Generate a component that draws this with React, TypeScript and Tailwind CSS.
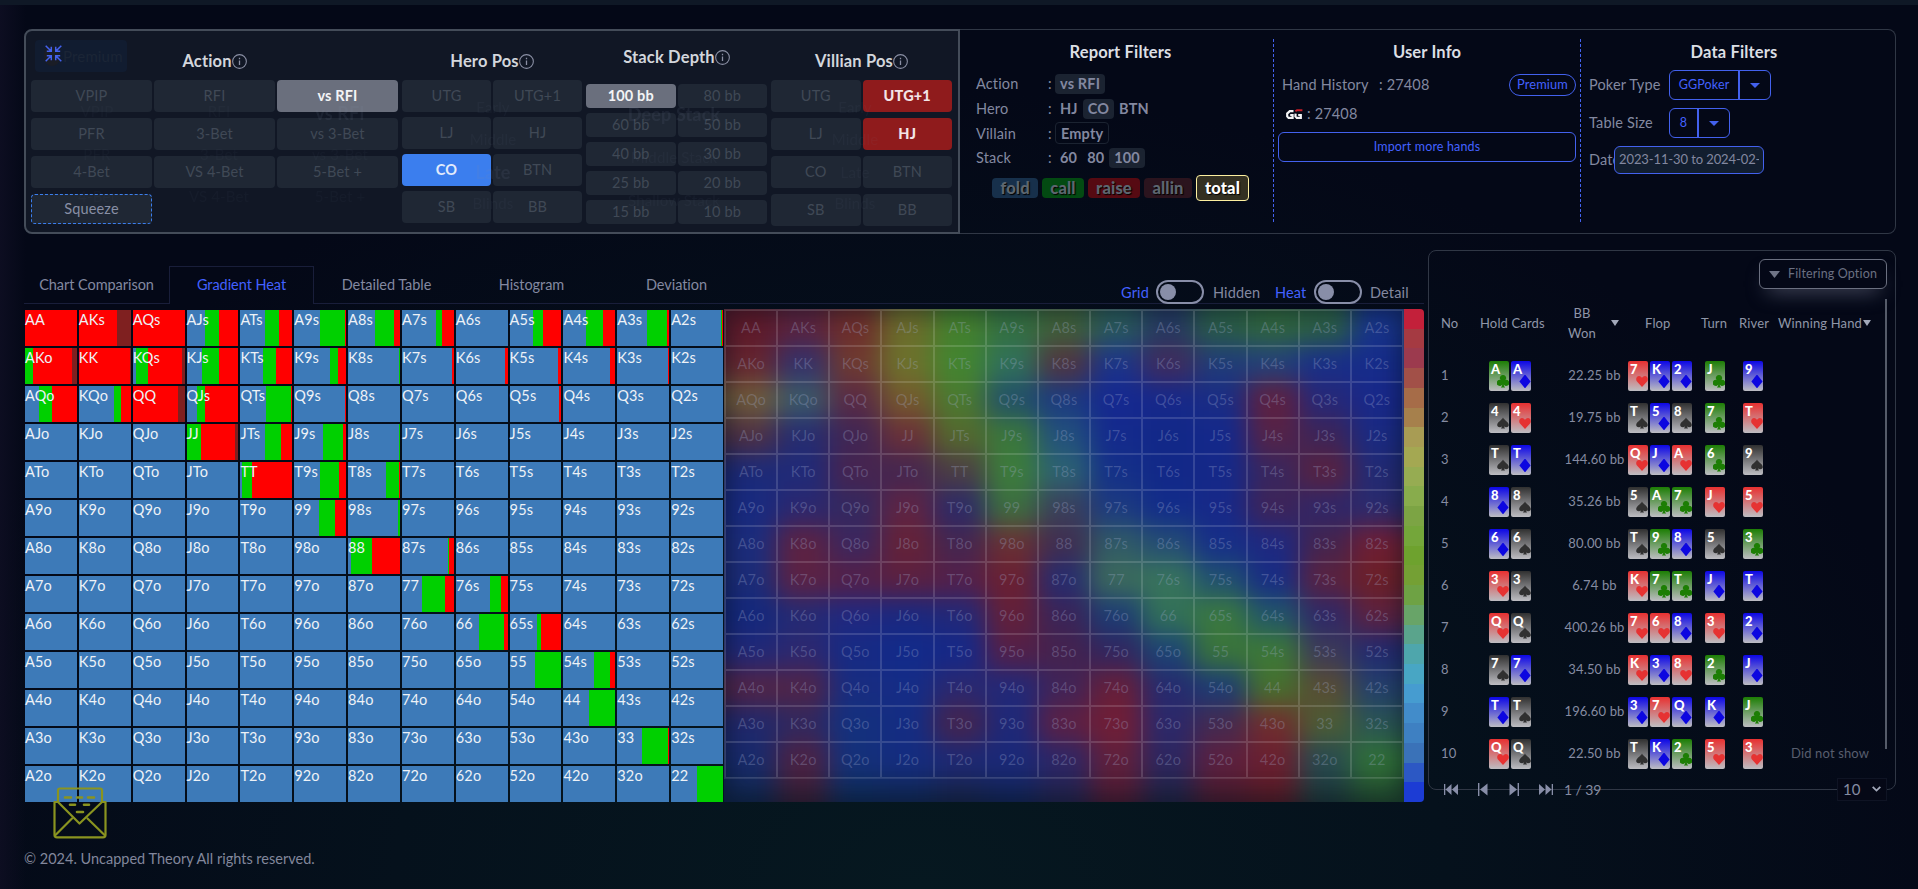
import React from 'react';

const RANKS = ['A', 'K', 'Q', 'J', 'T', '9', '8', '7', '6', '5', '4', '3', '2'];

const handName = (r: number, c: number) =>
  r === c ? RANKS[r] + RANKS[c] : r < c ? `${RANKS[r]}${RANKS[c]}s` : `${RANKS[c]}${RANKS[r]}o`;

/* Start of the call, raise and all-in segments, in percent of the cell. */
const MIX: Record<string, [number, number, number]> = {
  AA: [0, 0, 100], AKs: [0, 0, 73], AQs: [0, 0, 100], AJs: [35, 63, 100], ATs: [49, 74.5, 100],
  A9s: [50, 98, 100], A8s: [52, 88.5, 100], A7s: [65, 77, 100], A5s: [46, 64, 100], A4s: [44, 77, 100],
  A3s: [57.5, 96, 100], A2s: [96, 98, 100],
  AKo: [0, 15.5, 90], KK: [0, 0, 98], KQs: [5.5, 28.5, 94], KJs: [28.5, 63, 100], KTs: [44, 69, 100],
  K9s: [68.5, 84.5, 100], K8s: [98, 100, 100], K7s: [96, 96, 100], K6s: [94.5, 94.5, 100],
  K5s: [94.5, 94.5, 100], K4s: [90, 90, 100], K3s: [98.5, 98.5, 100],
  AQo: [27, 52, 100], KQo: [67, 81, 100], QQ: [0, 0, 86.5], QJs: [19, 35, 100], QTs: [49.5, 98, 100],
  Q9s: [98, 98, 100], Q5s: [96.5, 96.5, 100],
  JJ: [0, 27, 94.5], JTs: [49, 79, 100], J9s: [55.5, 94.5, 100], J8s: [98, 100, 100],
  TT: [3, 23, 100], T9s: [50, 86.5, 100], T8s: [73, 98, 100],
  '99': [48, 79, 100], '98s': [95.5, 100, 100],
  '88': [5.5, 46, 100], '87s': [88, 90.5, 100],
  '77': [38.5, 83, 100], '76s': [65, 86.5, 100],
  '66': [44, 92.5, 100], '65s': [52.5, 61.5, 100],
  '55': [50, 100, 100], '54s': [59.5, 90, 100],
  '44': [50, 100, 100], '33': [48, 98, 100], '22': [50, 100, 100],
};

const HEAT: string[] = [
  '5e1a2a 5b2440 6e2e2c 6b6c2c 44802e 347042 40603a 2a5a5c 263a62 2a5c48 30663f 2c5f46 18348a',
  '652530 34306a 6e3a30 6c722c 428530 30705a 503440 1c3488 402c5c 203c78 22407a 182e88 162c8a',
  '6e5c3c 3c5a68 5a2a44 745a2e 4a7a30 225068 1c3a80 152890 16288a 1a2c84 5e2040 262878 18288a',
  '4e3044 262c70 402654 6a3038 54682e 3a763c 22507c 142a8c 122888 14288a 542348 3c2458 1a2a82',
  '1c2a78 202a78 462450 442650 4c3e44 3c7c3c 2c6272 143088 122888 152888 38265e 582240 222a74',
  '182a80 2a2870 34285f 5e2444 2c2a68 3c6e40 3a405c 1c3a80 122c8a 172888 3e2458 302668 2a2a6e',
  '1c2c7c 5c2242 3c265e 642238 442650 683034 402e50 305a66 244c74 162e88 1e2880 44244e 6e1e34',
  '1c2c78 5c2244 542048 5c2040 54204a 6a2032 262c70 3c6a5c 38745c 205070 182c84 5a2240 6c2028',
  '14287c 242a74 202880 1a2880 222878 62203a 3a2458 1c3c74 327058 3a7840 225668 2e2868 5c2240',
  '202878 2c2870 162a84 122a8a 152888 542048 44224e 302660 1c4474 3a743a 3c7838 3c3a58 222a70',
  '522446 502448 182c80 152c86 2a2870 222878 402458 661f3a 262a6e 1c3c74 46702e 584c34 24406c',
  '20286c 30285f 14307e 142c82 44244e 1e2878 5c2044 701e36 2c286a 442a50 702e2e 4c5c34 2a5454',
  '182a6c 4c2244 14307a 142c80 1e2874 1a2878 2e2666 60203c 2c2660 5c2040 6a1f30 284a50 307038',
  '122852 3a2038 102c5c 122a5c 182650 14265c 242450 501c34 222448 4c1c30 581c28 1e3a3c 245030',
];

const SCALE = [
  '#c3203a', '#a53a42', '#9c3a4e', '#a25048', '#a66c48', '#a6804c', '#a89c54', '#a4a852', '#96ac52',
  '#88ac4c', '#7ca444', '#74a63a', '#6ea22e', '#74a034', '#6ea244', '#68a468', '#5aa48c', '#4ea6ac',
  '#48a6c4', '#469cd0', '#428cca', '#3e80c2', '#3a72b8', '#2c58c4', '#1c3cd4',
];

const HANDS: [string, string, string, string, string, string][] = [
  ['Ac Ad', '22.25 bb', '7h Kd 2d', 'Jc', '9d', ''],
  ['4s 4h', '19.75 bb', 'Ts 5d 8s', '7c', 'Th', ''],
  ['Ts Td', '144.60 bb', 'Qh Jd Ah', '6c', '9s', ''],
  ['8d 8s', '35.26 bb', '5s Ac 7c', 'Jh', '5h', ''],
  ['6d 6s', '80.00 bb', 'Ts 9c 8d', '5s', '3c', ''],
  ['3h 3s', '6.74 bb', 'Kh 7c Tc', 'Jd', 'Td', ''],
  ['Qh Qs', '400.26 bb', '7h 6h 8d', '3h', '2d', ''],
  ['7s 7d', '34.50 bb', 'Kh 3d 8h', '2c', 'Jd', ''],
  ['Td Ts', '196.60 bb', '3d 7h Qd', 'Kd', 'Jc', ''],
  ['Qh Qs', '22.50 bb', 'Ts Kd 2c', '5h', '3h', 'Did not show'],
];

const SUIT: Record<string, { bg: string; fill: string; path: string }> = {
  h: {
    bg: 'bg-linear-to-b/srgb from-[#e83030] to-[#bdbdc2]', fill: '#e63232',
    path: 'M6 12 L1 6.6 C-0.8 4 0.6 1 3 1 C4.6 1 5.6 2 6 3 C6.4 2 7.4 1 9 1 C11.4 1 12.8 4 11 6.6 Z',
  },
  d: {
    bg: 'bg-linear-to-b/srgb from-[#0c06e6] to-[#bdbdc2]', fill: '#0c06e0',
    path: 'M6 -0.6 L11.6 6.4 L6 13.4 L0.4 6.4 Z',
  },
  c: {
    bg: 'bg-linear-to-b/srgb from-[#1c7e04] to-[#bdbdc2]', fill: '#1c7e04',
    path: 'M6 0 A3 3 0 0 1 8.4 5 A3 3 0 1 1 6.8 9.4 L7 11 L8.2 12.6 H3.8 L5 11 L5.2 9.4 A3 3 0 1 1 3.6 5 A3 3 0 0 1 6 0 Z',
  },
  s: {
    bg: 'bg-linear-to-b/srgb from-[#303030] to-[#bdbdc2]', fill: '#303030',
    path: 'M6 0.6 C7 3 12 5.4 11.8 8.2 C11.6 10.4 8.4 10.8 6.8 9.2 L8 11.6 H4 L5.2 9.2 C3.6 10.8 0.4 10.4 0.2 8.2 C0 5.4 5 3 6 0.6 Z',
  },
};

function Card({ code }: { code: string }) {
  const s = SUIT[code[1]];
  return (
    <div className={`relative h-[30px] w-5 overflow-hidden rounded-[2px] ${s.bg}`}>
      <span className="absolute top-0 left-[2px] text-[13px] leading-[16px] font-black text-white">{code[0]}</span>
      <svg className="absolute right-0 bottom-[3px]" width="12" height="13" viewBox="0 0 12 13">
        <path d={s.path} fill={s.fill} />
      </svg>
    </div>
  );
}

function Cards({ codes }: { codes: string }) {
  return (
    <div className="flex gap-[2px]">
      {codes.split(' ').map((c, i) => (
        <Card key={i} code={c} />
      ))}
    </div>
  );
}

function Info() {
  return (
    <svg width="15" height="15" viewBox="0 0 14 14" fill="none" stroke="#8b90a5" strokeWidth="1">
      <circle cx="7" cy="7" r="6.4" />
      <path d="M7 6v4.2M7 3.6v1.2" strokeWidth="1.2" />
    </svg>
  );
}

function Heading({ children }: { children: React.ReactNode }) {
  return (
    <div className="flex h-6 items-center justify-center text-[16.5px] leading-6 font-bold text-[#d3d6dc]">
      <span>{children}</span>
      <Info />
    </div>
  );
}

type Kind = 'off' | 'grey' | 'blue' | 'red' | 'dash';
const KIND: Record<Kind, string> = {
  off: 'bg-[#1f2734] text-[#404956]',
  grey: 'bg-[#6a6f7d] text-[#f3f4f6] font-bold',
  blue: 'bg-[#3b7eee] text-[#e2ebfb] font-bold',
  red: 'bg-[#8f1b1c] text-[#f3e4e6] font-black',
  dash: 'bg-[#1f2734] text-[#888fa5] border border-dashed border-[#3b7eee]',
};

function Opt({ label, kind = 'off', h }: { label: string; kind?: Kind; h: string }) {
  return (
    <div className={`flex items-center justify-center rounded-[4px] pb-px text-[14.5px] ${h} ${KIND[kind]}`}>{label}</div>
  );
}

/* Labels of the collapsed view, almost faded out. */
const GHOSTS: [string, string][] = [
  ['VPIP', 'left-[71px] top-[80px] text-[15px] opacity-4'],
  ['RFI', 'left-[193px] top-[80px] text-[15px] opacity-4'],
  ['vs RFI', 'left-[314px] top-[82px] text-[18px] font-bold opacity-10'],
  ['PFR', 'left-[71px] top-[123px] text-[15px] opacity-4'],
  ['3-Bet', 'left-[193px] top-[123px] text-[15px] opacity-4'],
  ['vs 3-Bet', 'left-[314px] top-[123px] text-[15px] opacity-4'],
  ['4-Bet', 'left-[71px] top-[165px] text-[15px] opacity-4'],
  ['VS 4-Bet', 'left-[193px] top-[165px] text-[15px] opacity-4'],
  ['5-Bet +', 'left-[314px] top-[165px] text-[15px] opacity-4'],
  ['Early', 'left-[467px] top-[76px] text-[15px] opacity-5'],
  ['Middle', 'left-[467px] top-[108px] text-[15px] opacity-5'],
  ['Late', 'left-[467px] top-[141px] text-[18px] font-bold opacity-10'],
  ['Blinds', 'left-[467px] top-[172px] text-[15px] opacity-5'],
  ['Deep Stack', 'left-[648px] top-[83px] text-[18px] font-bold opacity-10'],
  ['Middle Stack', 'left-[648px] top-[126px] text-[15px] opacity-5'],
  ['Shallow Stack', 'left-[648px] top-[169px] text-[15px] opacity-5'],
  ['Early', 'left-[829px] top-[76px] text-[15px] opacity-5'],
  ['Middle', 'left-[829px] top-[108px] text-[15px] opacity-5'],
  ['Late', 'left-[829px] top-[141px] text-[15px] opacity-5'],
  ['Blinds', 'left-[829px] top-[172px] text-[15px] opacity-5'],
];

function Selector() {
  return (
    <div className="relative flex h-[205px] w-[936px] rounded-l-lg border-2 border-[#444c59] bg-[#111725] pl-[5px]">
      <div className="w-[367px] pt-[18px]">
        <Heading>Action</Heading>
        <div className="mt-[7px] grid grid-cols-3 gap-x-[2px] gap-y-[6px]">
          {['VPIP', 'RFI', 'vs RFI', 'PFR', '3-Bet', 'vs 3-Bet', '4-Bet', 'VS 4-Bet', '5-Bet +'].map((l) => (
            <Opt key={l} label={l} kind={l === 'vs RFI' ? 'grey' : 'off'} h="h-8" />
          ))}
          <Opt label="Squeeze" kind="dash" h="h-[30px]" />
        </div>
      </div>
      <div className="ml-1 w-[180px] pt-[18px]">
        <Heading>Hero Pos</Heading>
        <div className="mt-[7px] grid grid-cols-2 gap-x-[2px] gap-y-[5px]">
          {['UTG', 'UTG+1', 'LJ', 'HJ', 'CO', 'BTN', 'SB', 'BB'].map((l) => (
            <Opt key={l} label={l} kind={l === 'CO' ? 'blue' : 'off'} h="h-8" />
          ))}
        </div>
      </div>
      <div className="ml-1 w-[181px] pt-[14px]">
        <Heading>Stack Depth</Heading>
        <div className="mt-[15px] grid grid-cols-2 gap-x-[2px] gap-y-[5px]">
          {['100 bb', '80 bb', '60 bb', '50 bb', '40 bb', '30 bb', '25 bb', '20 bb', '15 bb', '10 bb'].map((l) => (
            <Opt key={l} label={l} kind={l === '100 bb' ? 'grey' : 'off'} h="h-6" />
          ))}
        </div>
      </div>
      <div className="ml-1 w-[181px] pt-[18px]">
        <Heading>Villian Pos</Heading>
        <div className="mt-[7px] grid grid-cols-2 gap-x-[2px] gap-y-[6px]">
          {['UTG', 'UTG+1', 'LJ', 'HJ', 'CO', 'BTN', 'SB', 'BB'].map((l) => (
            <Opt key={l} label={l} kind={l === 'UTG+1' || l === 'HJ' ? 'red' : 'off'} h="h-8" />
          ))}
        </div>
      </div>
      {/* collapse control over the fading premium badge */}
      <div className="absolute top-[9px] left-[9px] flex h-8 w-[92px] items-center rounded bg-[#111c30]">
        <div className="ml-[9px] h-5 w-4 rounded-full bg-[#1a1d26]" />
        <span className="ml-[3px] text-[15px] text-[#1b2536]">Premium</span>
        <svg className="absolute top-[5px] left-[10px]" width="17" height="17" viewBox="0 0 17 17" fill="none" stroke="#4361ee" strokeWidth="1.5">
          <path d="M0.7 0.7 6 6M6.3 1.8V6.3H1.8M16.3 0.7 11 6M10.7 1.8V6.3H15.2M0.7 16.3 6 11M6.3 15.2V10.7H1.8M16.3 16.3 11 11M10.7 15.2V10.7H15.2" />
        </svg>
      </div>
      {GHOSTS.map(([t, cls], i) => (
        <span key={i} className={`pointer-events-none absolute -translate-x-1/2 -translate-y-1/2 whitespace-nowrap text-[#7e8ca8] ${cls}`}>
          {t}
        </span>
      ))}
    </div>
  );
}

function Chip({ children, on = false }: { children: React.ReactNode; on?: boolean }) {
  return (
    <span className={`flex h-5 items-center rounded px-[5px] font-bold ${on ? 'bg-[#1b2331]' : ''}`}>{children}</span>
  );
}

function FilterRow({ label, children }: { label: string; children: React.ReactNode }) {
  return (
    <div className="flex h-[24.6px] items-center">
      <span className="w-[72px]">{label}</span>
      <span className="w-[7px]">:</span>
      <div className="flex">{children}</div>
    </div>
  );
}

function ReportFilters() {
  return (
    <div className="w-[313px] pt-[10px]">
      <h2 className="pl-2 text-center text-[16.5px] leading-6 font-bold text-[#dcdfe4]">Report Filters</h2>
      <div className="mt-[8px] pl-4 text-[14.5px] text-[#8388a0]">
        <FilterRow label="Action"><Chip on>vs RFI</Chip></FilterRow>
        <FilterRow label="Hero"><Chip>HJ</Chip><Chip on>CO</Chip><Chip>BTN</Chip></FilterRow>
        <FilterRow label="Villain">
          <span className="flex h-[22px] items-center rounded border border-[#1b2331] px-[5px] font-bold">Empty</span>
        </FilterRow>
        <FilterRow label="Stack"><Chip>60</Chip><Chip>80</Chip><Chip on>100</Chip></FilterRow>
      </div>
      <div className="mt-[5px] flex items-center gap-1 pl-8 text-[16.5px] font-black text-[#5d6670] [text-shadow:1px_1px_1px_#000]">
        <span className="flex h-5 w-[46px] items-center justify-center rounded bg-[#17304b]">fold</span>
        <span className="flex h-5 w-[42px] items-center justify-center rounded bg-[#034a12]">call</span>
        <span className="flex h-5 w-[52px] items-center justify-center rounded bg-[#560a12]">raise</span>
        <span className="flex h-5 w-[48px] items-center justify-center rounded bg-[#2b141e]">allin</span>
        <span className="flex h-[26px] w-[53px] items-center justify-center rounded border border-[#fdf0a0] bg-[#333022] text-white">total</span>
      </div>
    </div>
  );
}

function DashedDivider() {
  return (
    <div className="mt-[9px] h-[185px] w-px bg-[repeating-linear-gradient(to_bottom,#4361ee_0_3px,transparent_3px_5px)]" />
  );
}

function UserInfo() {
  return (
    <div className="w-[306px] px-1 pt-[10px] text-[14.5px] text-[#8388a0]">
      <h2 className="text-center text-[16.5px] leading-6 font-bold text-[#dcdfe4]">User Info</h2>
      <div className="mt-[9px] flex h-[24px] items-center pl-1">
        <span className="w-[97px]">Hand History</span>
        <span>: 27408</span>
        <span className="ml-auto flex h-[22px] w-[67px] items-center justify-center rounded-full border border-[#4361ee] pb-px text-[12.8px] text-[#4361ff]">
          Premium
        </span>
      </div>
      <div className="mt-1 flex h-[26px] items-center pl-2">
        <svg width="17" height="11" viewBox="0 0 17 11" fill="none" stroke="#f4f4f6" strokeWidth="2.2">
          <path d="M7.5 2.2H3.8L1.2 4.6V7.4L2.6 8.9H6.6V6H4.2" />
          <path d="M9.6 4.6 9.4 7.4 10.8 8.9H14.8V6H12.2" />
          <path d="M9.4 2.3 11 1.2H16.4" stroke="#c81e28" strokeWidth="2" />
        </svg>
        <span className="ml-1">: 27408</span>
      </div>
      <div className="mt-[5px] flex h-[30px] items-center justify-center rounded-md border border-[#4361ee] text-[12.5px] text-[#4361ff]">
        Import more hands
      </div>
    </div>
  );
}

function SplitButton({ label, w }: { label: string; w: string }) {
  return (
    <div className="flex h-[30px] rounded-md border border-[#4361ee] text-[12.5px] text-[#4361ff]">
      <span className={`flex items-center justify-center border-r-2 border-[#4361ee] ${w}`}>{label}</span>
      <span className="flex w-[30px] items-center justify-center">
        <svg width="10" height="5" viewBox="0 0 10 5"><path d="M0 0H10L5 5Z" fill="#4361ee" /></svg>
      </span>
    </div>
  );
}

function DataFilters() {
  return (
    <div className="flex-1 pt-[10px] pl-2 text-[14.5px] text-[#8388a0]">
      <h2 className="pr-4 text-center text-[16.5px] leading-6 font-bold text-[#dcdfe4]">Data Filters</h2>
      <div className="mt-[6px] flex h-[30px] items-center">
        <span className="w-20">Poker Type</span>
        <SplitButton label="GGPoker" w="w-[70px]" />
      </div>
      <div className="mt-2 flex h-[30px] items-center">
        <span className="w-20">Table Size</span>
        <SplitButton label="8" w="w-[29px]" />
      </div>
      <div className="mt-2 flex h-7 items-center">
        <span className="w-[25px] overflow-hidden">Date</span>
        <div className="flex h-7 w-[150px] items-center rounded-md border border-[#4361ee] bg-[#121e2f] px-1 text-[13px]">
          <span className="overflow-hidden whitespace-nowrap tracking-[-0.1px]">2023-11-30 to 2024-02-11</span>
        </div>
      </div>
    </div>
  );
}

function Toggle() {
  return (
    <span className="flex h-6 w-12 items-center rounded-full border-2 border-[#888ea8] pl-[2px]">
      <span className="h-4 w-4 rounded-full bg-[#888ea8]" />
    </span>
  );
}

function Tabs() {
  const tabs = ['Chart Comparison', 'Gradient Heat', 'Detailed Table', 'Histogram', 'Deviation'];
  return (
    <div className="flex h-[38px] items-stretch text-[14.5px] text-[#8388a0]">
      {tabs.map((t) => (
        <div
          key={t}
          className={
            t === 'Gradient Heat'
              ? 'flex w-[145px] items-center justify-center border border-b-0 border-[#191e3a] pb-[2px] tracking-[-0.05px] text-[#4361ff]'
              : 'flex w-[145px] items-center justify-center border-b border-[#191e3a] tracking-[-0.05px]'
          }
        >
          {t}
        </div>
      ))}
      <div className="flex flex-1 items-end justify-end border-b border-[#191e3a] pr-4">
        <div className="-mb-px flex items-center">
          <span className="w-[35px] pt-px text-[#4361ff]">Grid</span>
          <Toggle />
          <span className="ml-[9px] w-[62px] pt-px">Hidden</span>
          <span className="w-[39px] pt-px text-[#4361ff]">Heat</span>
          <Toggle />
          <span className="ml-2 w-[38px] pt-px">Detail</span>
        </div>
      </div>
    </div>
  );
}

function RangeGrid() {
  return (
    <div className="grid w-[698px] grid-cols-13 gap-[2px]">
      {RANKS.map((_, r) =>
        RANKS.map((_, c) => {
          const n = handName(r, c);
          const m = MIX[n];
          const background = m
            ? `linear-gradient(to right,#3d7ab8 ${m[0]}%,#00d000 ${m[0]}% ${m[1]}%,#f00 ${m[1]}% ${m[2]}%,#7f2020 ${m[2]}%)`
            : '#3d7ab8';
          return (
            <div key={n} className="h-9 text-[14.5px] leading-[20px] text-[#eef2f7]" style={{ background }}>
              {n}
            </div>
          );
        }),
      )}
    </div>
  );
}

function HeatMap() {
  const rows = HEAT.map((l) => l.split(' '));
  const cw = 680 / 13;
  const cells: React.ReactNode[] = [];
  for (let r = -1; r <= 14; r++) {
    for (let c = -1; c <= 13; c++) {
      const col = rows[Math.min(13, Math.max(0, r))][Math.min(12, Math.max(0, c))];
      cells.push(<rect key={`${r}:${c}`} x={c * cw} y={r * 36} width={cw + 0.6} height={36.6} fill={`#${col}`} />);
    }
  }
  return (
    <div className="relative h-[493px] w-[680px] overflow-hidden">
      <svg className="absolute inset-0" width="680" height="493" viewBox="0 0 680 493">
        <defs>
          <filter id="soft" x="-5%" y="-5%" width="110%" height="110%" colorInterpolationFilters="sRGB">
            <feGaussianBlur stdDeviation="13" />
          </filter>
        </defs>
        <g filter="url(#soft)">{cells}</g>
      </svg>
      <div className="absolute inset-0 shadow-[inset_0_0_22px_4px_rgba(4,14,26,0.5)]" />
      <div className="relative grid grid-cols-13 border border-white/10">
        {RANKS.map((_, r) =>
          RANKS.map((_, c) => (
            <div key={`${r}-${c}`} className="flex h-9 items-center justify-center border border-white/14 text-[14.5px] text-[#a9b4d8]/28">
              {handName(r, c)}
            </div>
          )),
        )}
      </div>
    </div>
  );
}

function ScaleBar() {
  return (
    <div className="flex h-[493px] w-5 flex-col overflow-hidden rounded-r">
      {SCALE.map((c, i) => (
        <div key={i} className="flex-1" style={{ background: c }} />
      ))}
    </div>
  );
}

function Caret() {
  return <svg width="8" height="6" viewBox="0 0 8 6"><path d="M0 0H8L4 6Z" fill="#a3a9ba" /></svg>;
}

function HandTable() {
  return (
    <div className="relative flex h-[540px] w-[468px] flex-col rounded-lg border border-[#303745] pl-3 text-[13px] text-[#868ca2]">
      <div className="mt-2 flex justify-end pr-2">
        <div className="flex h-[30px] w-[128px] items-center justify-center gap-2 rounded-md border border-[#6b7080] text-[12.5px] text-[#6b7082] shadow-[0_10px_20px_-8px_rgba(136,142,168,0.55)]">
          <svg width="11" height="7" viewBox="0 0 11 7"><path d="M0 0H11L5.5 7Z" fill="#6f7486" /></svg>
          Filtering Option
        </div>
      </div>
      <div className="mt-[14px] flex h-10 items-center text-[13px] leading-5 text-[#8f96a8]">
        <span className="w-[39px]">No</span>
        <span className="w-[84px]">Hold Cards</span>
        <span className="w-[36px] text-center">BB<br />Won</span>
        <span className="ml-[11px] w-[34px]"><Caret /></span>
        <span className="w-[56px]">Flop</span>
        <span className="w-[38px]">Turn</span>
        <span className="w-[39px]">River</span>
        <span>Winning Hand</span>
        <span className="pl-px"><Caret /></span>
      </div>
      <div className="mt-[12px]">
        {HANDS.map(([hold, won, flop, turn, river, win], i) => (
          <div key={i} className="grid h-[42px] grid-cols-[48px_74px_65px_77px_38px_38px_80px] items-center">
            <span>{i + 1}</span>
            <Cards codes={hold} />
            <span className="pr-[2px] text-center whitespace-nowrap">{won}</span>
            <Cards codes={flop} />
            <Cards codes={turn} />
            <Cards codes={river} />
            <span className="pl-[10px] whitespace-nowrap text-[#585e6e]">{win}</span>
          </div>
        ))}
      </div>
      <div className="mt-[2px] flex h-6 shrink-0 items-center pl-[3px]">
        <svg width="14" height="11" viewBox="0 0 14 11" fill="#888ea8"><path d="M0 0H1.3V11H0ZM7.5 0V11L1.5 5.5ZM14 0V11L8 5.5Z" /></svg>
        <svg className="ml-5" width="10" height="13" viewBox="0 0 10 13" fill="#888ea8"><path d="M0 0H1.4V13H0ZM9.5 0.5V12.5L2 6.5Z" /></svg>
        <svg className="ml-[21px]" width="10" height="13" viewBox="0 0 10 13" fill="#888ea8"><path d="M10 0H8.6V13H10ZM0.5 0.5V12.5L8 6.5Z" /></svg>
        <svg className="ml-5" width="14" height="11" viewBox="0 0 14 11" fill="#888ea8"><path d="M14 0H12.7V11H14ZM6.5 0V11L12.5 5.5ZM0 0V11L6 5.5Z" /></svg>
        <span className="ml-[11px] text-[14px] tracking-[-0.1px]">1 / 39</span>
        <div className="mr-2 ml-auto flex h-[23px] w-[50px] items-center justify-between border border-[#0f1424] bg-[#050816] px-[5px] text-[15px]">
          10
          <svg width="9" height="6" viewBox="0 0 9 6" fill="none" stroke="#a3a9ba" strokeWidth="1.8"><path d="M0.7 0.8 4.5 4.6 8.3 0.8" /></svg>
        </div>
      </div>
      <div className="absolute top-[48px] right-[8px] h-[450px] w-[2px] bg-[#555b69]" />
    </div>
  );
}

export default function App() {
  return (
    <div className="relative h-[889px] w-[1918px] overflow-hidden bg-[#050b18] bg-[linear-gradient(to_right,rgba(14,14,34,0.9)_0,rgba(14,14,34,0)_26px),radial-gradient(ellipse_1050px_800px_at_48%_100%,#061820_0%,#05111c_50%,#040817_100%)] font-[Lato,'Noto_Sans',sans-serif] tracking-[0.15px]">
      <div className="h-[5px] bg-[#0f1826]" />
      <div className="mx-6 mt-6 flex h-[205px] w-[1872px] rounded-lg">
        <Selector />
        <div className="flex flex-1 rounded-r-lg border border-l-0 border-[#303745]">
          <ReportFilters />
          <DashedDivider />
          <UserInfo />
          <DashedDivider />
          <DataFilters />
        </div>
      </div>
      <div className="mx-6 flex">
        <div className="w-[1400px] shrink-0 pt-8">
          <Tabs />
          <div className="mt-[5px] flex pl-px">
            <div className="pt-px"><RangeGrid /></div>
            <div className="ml-px"><HeatMap /></div>
            <ScaleBar />
          </div>
        </div>
        <div className="mt-4 ml-1 shrink-0"><HandTable /></div>
      </div>
      <div className="absolute top-[849px] left-6 text-[14.5px] leading-5 tracking-[0px] text-[#82879c]">
        © 2024. Uncapped Theory All rights reserved.
      </div>
      <svg className="absolute top-[787px] left-[53px]" width="54" height="52" viewBox="0 0 54 52" fill="none" stroke="#8a9420" strokeWidth="2.2" strokeLinejoin="round" strokeLinecap="round">
        <path d="M5 15V3.5Q5 1.5 7 1.5H47Q49 1.5 49 3.5V15" />
        <path d="M5 15H1.5V48Q1.5 50.3 4 50.3H50Q52.500 50.300 52.500 48V15H49L26.500 36.500Z" />
        <path d="M2.500 48 19 31.500M51.500 48 34.500 31.500" />
        <path d="M12 10.500H18M24 10.500H29M35 10.500H41M17 17.700H22M31 17.700H36M24 25H30" strokeWidth="2.6" />
      </svg>
    </div>
  );
}
